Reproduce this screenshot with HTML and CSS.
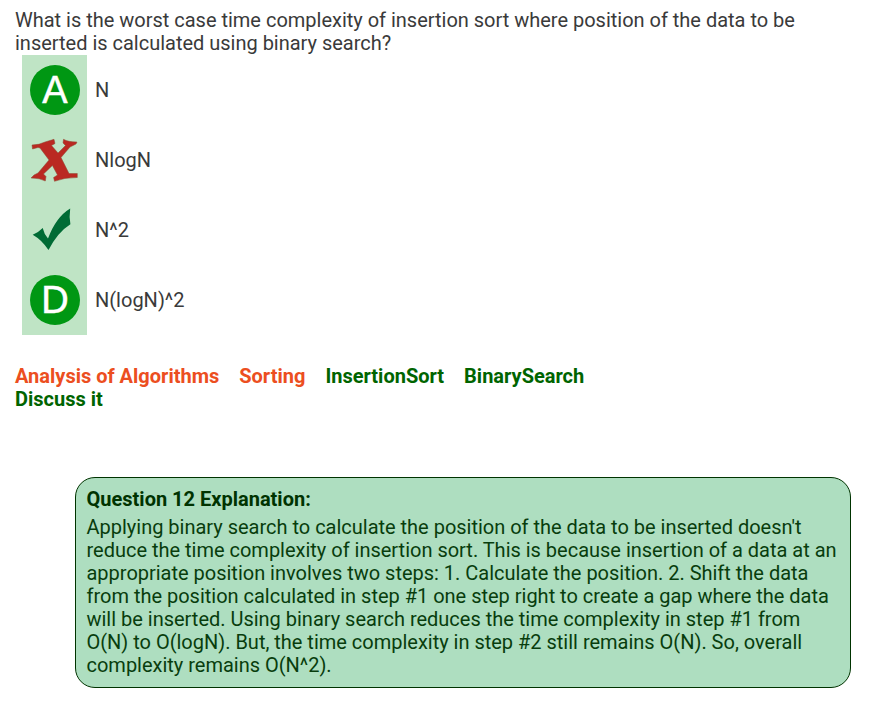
FILE: index.html
```html
<!DOCTYPE html>
<html lang="en">
<head>
<meta charset="utf-8">
<title>Insertion Sort Quiz</title>
<link rel="stylesheet" href="styles.css">
</head>
<body>
<main>
<p class="question">What is the worst case time complexity of insertion sort where position of the data to be<br>inserted is calculated using binary search?</p>
<div class="answers">
  <div class="row"><div class="mark"><span class="letter">A</span></div><span class="answer">N</span></div>
  <div class="row"><div class="mark"><svg width="50" height="50" viewBox="0 0 50 50"><path fill="#ba2922" stroke="#8c4a35" stroke-width=".5" d="M2 10 Q9 10 15 7 L24 4.3 L25 8.5 L21.5 10.5 L28 18 L35.5 10.5 L33 8 L33.5 4.3 Q38 7 47 7 L46 9 L40 12 L31 22.5 L39 38.5 L47.3 38.5 L47.3 42.5 Q34 42.5 24.5 46.3 L23.6 42.5 L27.5 40 L22.4 30.5 L13.5 39 L16 41.5 L15.3 46 Q10 43 1 43 L4 40 L8 38 L19 25 L10 13 L8 12.5 L2.5 14 Z"/></svg></div><span class="answer">NlogN</span></div>
  <div class="row"><div class="mark"><svg width="50" height="50" viewBox="0 0 50 50"><path fill="#006b35" d="M2.7 29.7 Q9 27 12.7 23 Q14 29 18 33.5 Q26 12 40.2 3.5 Q39 12 40.4 19.3 Q28 27 18.5 45 Q12 35 2.7 29.7 Z"/></svg></div><span class="answer">N^2</span></div>
  <div class="row"><div class="mark"><span class="letter">D</span></div><span class="answer">N(logN)^2</span></div>
</div>
<div class="tags"><span class="category">Analysis of Algorithms</span><span class="category">Sorting</span><span>InsertionSort</span><span>BinarySearch</span></div>
<div class="discuss">Discuss it</div>
<section class="explanation">
<h2>Question 12 Explanation:</h2>
<p>Applying binary search to calculate the position of the data to be inserted doesn't<br>reduce the time complexity of insertion sort. This is because insertion of a data at an<br>appropriate position involves two steps: 1. Calculate the position. 2. Shift the data<br>from the position calculated in step #1 one step right to create a gap where the data<br>will be inserted. Using binary search reduces the time complexity in step #1 from<br>O(N) to O(logN). But, the time complexity in step #2 still remains O(N). So, overall<br>complexity remains O(N^2).</p>
</section>
</main>
</body>
</html>
```
FILE: styles.css
```css
* { box-sizing: border-box; }
body { margin: 0; background: #fff; color: #3a3a3a; font: 400 20px/23px Roboto, sans-serif; }
main { padding: 9px 15px 0; }
p { margin: 0; white-space: nowrap; letter-spacing: -.01px; }
.answers { margin-left: 7px; }
.row { display: flex; height: 70px; align-items: center; }
.mark { width: 65px; height: 70px; padding: 10px 8px; background: #bfe4c5; }
.mark svg { display: block; }
.letter { display: block; width: 50px; height: 50px; border-radius: 50%; background: #009713; color: #fff; font: 38px/50px "Liberation Sans", sans-serif; text-align: center; -webkit-text-stroke: .5px #fff; }
.answer { margin-left: 8px; }
.tags { display: flex; gap: 20px; margin-top: 30px; color: #006400; font-weight: 700; white-space: nowrap; }
.category { color: #ec4e20; }
.discuss { color: #006400; font-weight: 700; }
.explanation { width: 776px; height: 211px; margin: 66px 0 0 60px; padding: 10px 10.5px; border: 1px solid #003300; border-radius: 20px; background: #aedec0; color: #003300; }
.explanation p { color: #083d0d; }
h2 { margin: 0 0 5px; font-size: 20px; line-height: 23px; font-weight: 700; }
```
